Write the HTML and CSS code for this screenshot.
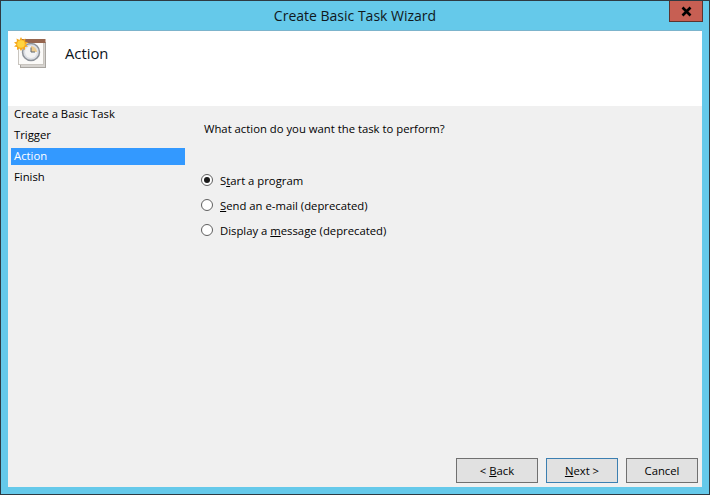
FILE: index.html
```html
<!DOCTYPE html>
<html lang="en">
<head>
<meta charset="utf-8">
<title>Create Basic Task Wizard</title>
<link rel="stylesheet" href="styles.css">
</head>
<body>
<div class="window">
  <div class="titlebar">
    <div class="title">Create Basic Task Wizard</div>
    <div class="close"><svg width="13" height="11" viewBox="0 0 13 11"><path d="M2.500 1.500 L10.500 9.500 M10.500 1.500 L2.500 9.500" stroke="#000" stroke-width="2.600" fill="none"/></svg></div>
  </div>
  <div class="client">
    <div class="header">
      <svg class="task-icon" width="32" height="32" viewBox="0 0 32 32">
        <rect x="6.500" y="5.500" width="25" height="25" fill="#d6d3cf" stroke="#a8a5a0"/>
        <rect x="4.500" y="4.500" width="25" height="23" fill="#fbfaf8" stroke="#c9c5bf"/>
        <rect x="6" y="2" width="25.500" height="4" fill="#96664f"/>
        <circle cx="17" cy="15" r="8.500" fill="#dcdfe4" stroke="#8d9299" stroke-width="1.500"/>
        <circle cx="17" cy="15" r="6" fill="#f3f3f3"/>
        <path d="M17 15 V9 A6 6 0 0 1 23 15 Z" fill="#eccb8e"/>
        <path d="M17 10.500 V15 H21" stroke="#5d6670" stroke-width="1" fill="none"/>
        <path d="M7 0 L8.500 3 L11.500 1.500 L11 4.500 L14 5.500 L11.500 7.500 L14 9.500 L11 10 L11 13 L8.500 11.500 L7 14 L5.500 11.500 L3 13 L3 10 L0 9.500 L2.500 7.500 L0 5.500 L3 4.500 L2.500 1.500 L5.500 3 Z" fill="#f6a81c"/>
        <circle cx="7" cy="7" r="3.800" fill="#ffd43f"/>
      </svg>
      <div class="heading">Action</div>
    </div>
    <div class="body">
      <nav class="steps">
        <div class="step">Create a Basic Task</div>
        <div class="step">Trigger</div>
        <div class="step active">Action</div>
        <div class="step">Finish</div>
      </nav>
      <main class="main">
        <p class="question">What action do you want the task to perform?</p>
        <div class="options">
          <div class="option"><span class="radio checked"></span><span>S<u>t</u>art a program</span></div>
          <div class="option"><span class="radio"></span><span><u>S</u>end an e-mail (deprecated)</span></div>
          <div class="option"><span class="radio"></span><span>Display a <u>m</u>essage (deprecated)</span></div>
        </div>
        <div class="buttons">
          <div class="btn">&lt; <u>B</u>ack</div>
          <div class="btn default"><u>N</u>ext &gt;</div>
          <div class="btn cancel">Cancel</div>
        </div>
      </main>
    </div>
  </div>
</div>
</body>
</html>
```
FILE: styles.css
```css
* { box-sizing: border-box; }
html, body { margin: 0; height: 100%; }
body {
  width: 710px;
  height: 495px;
  overflow: hidden;
  font-family: "Open Sans", "Noto Sans", "Liberation Sans", sans-serif;
  font-size: 11.3px;
  color: #000;
}
.window {
  width: 710px;
  height: 495px;
  display: flex;
  flex-direction: column;
  background: #65c9ea;
  border: 1px solid #2e3a42;
  padding: 0 7px 7px;
}
.titlebar {
  height: 30px;
  flex: none;
  position: relative;
  display: flex;
  align-items: center;
  justify-content: center;
  border-bottom: 1px solid #7cb4cc;
}
.title { font-size: 14px; color: #10181c; }
.close {
  position: absolute;
  top: 0;
  right: -1px;
  width: 34px;
  height: 21px;
  background: #c75f53;
  border: 1px solid #5b3430;
  border-top: 0;
  display: flex;
  align-items: center;
  justify-content: center;
}
.client {
  flex: 1;
  display: flex;
  flex-direction: column;
  background: #f0f0f0;
  min-height: 0;
}
.header {
  height: 75px;
  flex: none;
  background: #fff;
  display: flex;
  align-items: flex-start;
  padding: 5px 0 0 6px;
}
.task-icon { flex: none; margin-top: 1px; }
.heading { font-size: 14.800px; margin: 7px 0 0 19px; color: #0a1420; }
.body { flex: 1; display: flex; min-height: 0; }
.steps {
  width: 177px;
  flex: none;
  padding: 0 0 0 3px;
}
.step {
  height: 17px;
  margin-bottom: 4px;
  padding-left: 3px;
  line-height: 15px;
  white-space: nowrap;
}
.step.active { background: #3399ff; color: #fff; }
.main {
  flex: 1;
  display: flex;
  flex-direction: column;
  min-width: 0;
  padding: 14px 4px 4px 16px;
}
.question { margin: 0 0 0 3px; height: 18px; line-height: 18px; }
.options {
  margin-top: 33px;
  display: flex;
  flex-direction: column;
  gap: 7px;
}
.option {
  height: 18px;
  display: flex;
  align-items: center;
  gap: 7px;
  white-space: nowrap;
}
.radio {
  width: 12px;
  height: 12px;
  border: 1px solid #5f5f5f;
  border-radius: 50%;
  background: #fff;
  flex: none;
  display: flex;
  align-items: center;
  justify-content: center;
}
.radio.checked::after {
  content: "";
  width: 6px;
  height: 6px;
  border-radius: 50%;
  background: #1a1a1a;
}
.buttons {
  margin-top: auto;
  display: flex;
  justify-content: flex-end;
  gap: 8px;
}
.btn {
  width: 82px;
  height: 25px;
  border: 1px solid #707070;
  background: #e1e1e1;
  display: flex;
  align-items: center;
  justify-content: center;
  white-space: pre;
}
.btn.default { width: 72px; border-color: #3c7fb1; }
.btn.cancel { width: 72px; }
```
